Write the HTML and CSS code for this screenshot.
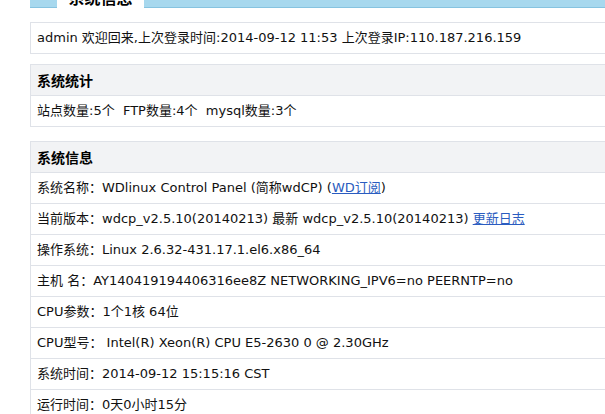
FILE: index.html
```html
<!DOCTYPE html>
<html lang="zh-CN">
<head>
<meta charset="utf-8">
<title>系统信息</title>
<link rel="stylesheet" href="styles.css">
</head>
<body>
<div class="page">
  <div class="tabbar">
    <div class="tab"><span class="tab-text">系统信息</span></div>
  </div>

  <div class="box welcome">
    <div class="row">admin 欢迎回来,上次登录时间:2014-09-12 11:53 上次登录IP:110.187.216.159</div>
  </div>

  <div class="box stats">
    <div class="head">系统统计</div>
    <div class="row">站点数量:5个&nbsp; FTP数量:4个&nbsp; mysql数量:3个</div>
  </div>

  <div class="box info">
    <div class="head">系统信息</div>
    <div class="row">系统名称：WDlinux Control Panel (简称wdCP) (<a href="#">WD订阅</a>)</div>
    <div class="row">当前版本：wdcp_v2.5.10(20140213) 最新 wdcp_v2.5.10(20140213) <a href="#">更新日志</a></div>
    <div class="row">操作系统：Linux 2.6.32-431.17.1.el6.x86_64</div>
    <div class="row">主机 名：AY140419194406316ee8Z NETWORKING_IPV6=no PEERNTP=no</div>
    <div class="row">CPU参数：1个1核 64位</div>
    <div class="row">CPU型号：&nbsp;Intel(R) Xeon(R) CPU E5-2630 0 @ 2.30GHz</div>
    <div class="row">系统时间：2014-09-12 15:15:16 CST</div>
    <div class="row">运行时间：0天0小时15分</div>
  </div>
</div>
</body>
</html>
```

FILE: styles.css
```css
html, body {
  margin: 0;
  padding: 0;
  background: #ffffff;
  overflow: hidden;
}

body {
  font-family: "DejaVu Sans", "Noto Sans CJK SC", sans-serif;
  font-size: 13px;
  color: #111111;
}

.page {
  margin-left: 30px;
  display: flex;
  flex-direction: column;
}

.tabbar {
  height: 7px;
  background: #a7d8ee;
  border-bottom: 1px solid #86c3e0;
  display: flex;
  padding-left: 27px;
}

.tab {
  width: 87px;
  height: 8px;
  background: #ffffff;
  overflow: hidden;
  display: flex;
  justify-content: center;
}

.tab-text {
  font-family: "Noto Sans CJK SC", sans-serif;
  font-weight: bold;
  font-size: 16px;
  line-height: 16px;
  margin-top: -11px;
  color: #000000;
}

.box {
  border-top: 1px solid #dfe2e8;
  border-left: 1px solid #dfe2e8;
  display: flex;
  flex-direction: column;
}

.welcome {
  margin-top: 14px;
}

.stats {
  margin-top: 10px;
}

.info {
  margin-top: 14px;
}

.head {
  height: 30px;
  line-height: 30px;
  padding-left: 6px;
  background: #f2f3f5;
  border-bottom: 1px solid #dfe2e8;
  font-family: "Noto Sans CJK SC", sans-serif;
  font-weight: bold;
  font-size: 14px;
  color: #000000;
}

.row {
  height: 30px;
  line-height: 30px;
  padding-left: 6px;
  border-bottom: 1px solid #dfe2e8;
  white-space: nowrap;
}

.row a {
  color: #2a5cc0;
  text-decoration: underline;
}
```
